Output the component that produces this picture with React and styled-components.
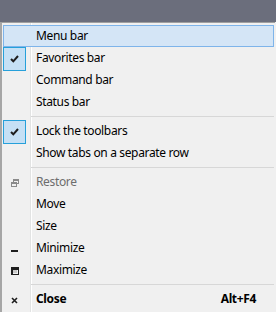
import React from "react";
import styled, { createGlobalStyle } from "styled-components";

const Global = createGlobalStyle`
  html, body { margin: 0; padding: 0; background: #f0f0f0; }
  body { font-family: "Noto Sans", "Liberation Sans", sans-serif; }
`;

const TitleStrip = styled.div`
  height: 22px;
  background: #6b6e7c;
`;

const Menu = styled.div`
  border-top: 1px solid #a0a0a0;
  border-left: 2px solid #a6a6a6;
  padding: 2px 0 2px 1px;
  min-height: 287px;
  background:
    linear-gradient(to right,
      transparent 28px, #e2e3e3 28px, #e2e3e3 29px,
      #ffffff 29px, #ffffff 30px, transparent 30px) no-repeat,
    #f0f0f0;
  width: 272px;
`;

const Row = styled.div`
  display: grid;
  grid-template-columns: 27px 1fr auto;
  align-items: center;
  height: 22px;
  box-sizing: border-box;
  width: 271px;
  border: 1px solid ${(p) => (p.$hot ? "#7eb4ea" : "transparent")};
  background: ${(p) => (p.$hot ? "#d4e5f6" : "transparent")};
  font-size: 12px;
  font-weight: ${(p) => (p.$bold ? 700 : 400)};
  color: ${(p) => (p.$disabled ? "#6d6d6d" : "#000")};
  letter-spacing: -0.35px;
`;

const IconCell = styled.div`
  display: flex;
  align-items: center;
  justify-content: center;
  align-self: stretch;
  margin: -1px 0 -1px -1px;
  width: 23px;
  box-sizing: border-box;
  border: 1px solid ${(p) => (p.$checked ? "#26a0da" : "transparent")};
  background: ${(p) => (p.$checked ? "#c5e0f5" : "transparent")};
`;

const Label = styled.span`
  padding-left: 5px;
  line-height: 22px;
  white-space: nowrap;
  position: relative;
  top: -1px;
`;

const Shortcut = styled.span`
  padding-right: 17px;
  line-height: 22px;
  position: relative;
  top: -1px;
`;

const Separator = styled.div`
  height: 7px;
  display: flex;
  align-items: center;
  margin-left: 28px;
  width: 243px;
  &::before {
    content: "";
    display: block;
    width: 100%;
    height: 1px;
    background: #d7d7d7;
  }
`;

const Check = () => (
  <svg width="9" height="8" viewBox="0 0 9 8">
    <path d="M1 4 L3.3 6.3 L8 1" fill="none" stroke="#1e1e1e" strokeWidth="2" />
  </svg>
);

const RestoreIcon = () => (
  <svg width="8" height="8" viewBox="0 0 8 8" shapeRendering="crispEdges">
    <rect x="2.5" y="0.5" width="5" height="4" fill="none" stroke="#8a8a8a" />
    <rect x="2" y="0" width="6" height="2" fill="#8a8a8a" />
    <rect x="0" y="3" width="6" height="5" fill="#f0f0f0" />
    <rect x="0.5" y="3.5" width="5" height="4" fill="none" stroke="#8a8a8a" />
    <rect x="0" y="3" width="6" height="2" fill="#8a8a8a" />
  </svg>
);

const MinimizeIcon = () => (
  <svg width="7" height="8" viewBox="0 0 7 8" shapeRendering="crispEdges">
    <rect x="0" y="5" width="7" height="2" fill="#1e1e1e" />
  </svg>
);

const MaximizeIcon = () => (
  <svg width="8" height="8" viewBox="0 0 8 8" shapeRendering="crispEdges">
    <rect x="0" y="0" width="8" height="8" fill="#1e1e1e" />
    <rect x="1.5" y="2.5" width="5" height="4" fill="#f0f0f0" />
    <rect x="2" y="3" width="4" height="3" fill="#c8c8c8" />
  </svg>
);

const CloseIcon = () => (
  <svg width="7" height="7" viewBox="0 0 7 7">
    <path d="M1 1 L6 6 M6 1 L1 6" stroke="#1e1e1e" strokeWidth="1.6" />
  </svg>
);

const Item = ({ label, icon, checked, hot, disabled, bold, shortcut }) => (
  <Row $hot={hot} $disabled={disabled} $bold={bold}>
    <IconCell $checked={checked}>{checked ? <Check /> : icon}</IconCell>
    <Label>{label}</Label>
    <Shortcut>{shortcut}</Shortcut>
  </Row>
);

export default function App() {
  return (
    <>
      <Global />
      <TitleStrip />
      <Menu>
        <Item label="Menu bar" hot />
        <Item label="Favorites bar" checked />
        <Item label="Command bar" />
        <Item label="Status bar" />
        <Separator />
        <Item label="Lock the toolbars" checked />
        <Item label="Show tabs on a separate row" />
        <Separator />
        <Item label="Restore" disabled icon={<RestoreIcon />} />
        <Item label="Move" />
        <Item label="Size" />
        <Item label="Minimize" icon={<MinimizeIcon />} />
        <Item label="Maximize" icon={<MaximizeIcon />} />
        <Separator />
        <Item label="Close" bold shortcut="Alt+F4" icon={<CloseIcon />} />
      </Menu>
    </>
  );
}
